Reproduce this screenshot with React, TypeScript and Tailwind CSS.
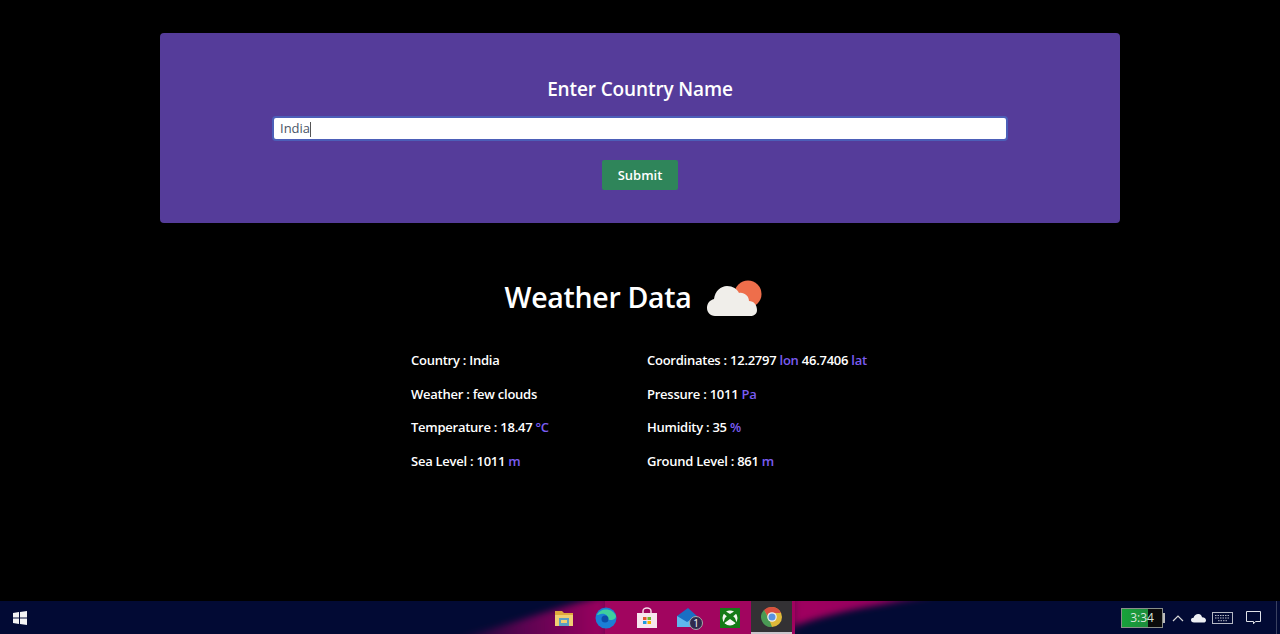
import React from 'react';

const font = { fontFamily: '"Open Sans", "Noto Sans", sans-serif' };

function Unit({ children }: { children: React.ReactNode }) {
  return <span className="text-[#7a5cf0]">{children}</span>;
}

function CloudSun() {
  return (
    <svg width="56" height="40" viewBox="0 0 56 40" className="block">
      <circle cx="41" cy="16" r="13.500" fill="#ee6e4b" />
      <path
        d="M8 38 C3 38 0 34 0 30 C0 25 3 22 7 21 C8 13 14 8 20 8 C26 8 30 11 32 15 C37 14 42 18 42 23 C47 23 50 27 50 32 C50 36 47 38 43 38 Z"
        fill="#f0eeea"
      />
    </svg>
  );
}

function Folder() {
  return (
    <svg width="20" height="18" viewBox="0 0 20 18">
      <path d="M1 2h7l2 2h9v13H1z" fill="#e0a93c" />
      <rect x="1" y="6" width="18" height="11" fill="#f0cf72" />
      <rect x="5" y="9" width="10" height="8" fill="#5b9fc4" />
      <rect x="7" y="11" width="6" height="3" fill="#f0cf72" />
    </svg>
  );
}

function Edge() {
  return (
    <svg width="22" height="22" viewBox="0 0 22 22">
      <circle cx="11" cy="11" r="10.5" fill="#1b7fd6" />
      <path d="M2 8 C5 1 17 0 21 9 C21 13 15 14 12 12 C14 9 10 6 6 7 C4 7.500 3 8 2 8Z" fill="#3fcf9e" />
      <circle cx="10" cy="12" r="3.500" fill="#0c4fa8" />
    </svg>
  );
}

function Store() {
  return (
    <svg width="20" height="22" viewBox="0 0 20 22">
      <path d="M6 6V4a4 3 0 0 1 8 0v2" fill="none" stroke="#f5d9e8" strokeWidth="1.500" />
      <rect x="0" y="6" width="20" height="15" fill="#f7e6ef" />
      <rect x="6" y="10" width="3.500" height="3" fill="#e2562d" />
      <rect x="10.500" y="10" width="3.500" height="3" fill="#6fb52c" />
      <rect x="6" y="14" width="3.500" height="3" fill="#1f9be0" />
      <rect x="10.500" y="14" width="3.500" height="3" fill="#f4b400" />
    </svg>
  );
}

function Mail() {
  return (
    <div className="relative w-[22px] h-[22px]">
      <svg width="22" height="20" viewBox="0 0 22 20" className="mt-[1px]">
        <path d="M0 8 L11 0 L20 8 V19 H0Z" fill="#1a6fc4" />
        <path d="M0 8 L10 14 L20 8 V19 H0Z" fill="#5fb7ee" />
      </svg>
      <div className="absolute left-[12px] top-[9px] w-[14px] h-[14px] rounded-full bg-[#2f2a4d] border border-[#aaa] flex items-center justify-center text-[10px] leading-none text-white">
        1
      </div>
    </div>
  );
}

function Xbox() {
  return (
    <div className="w-[20px] h-[20px] bg-[#157a17] flex items-center justify-center">
      <svg width="16" height="16" viewBox="0 0 16 16">
        <circle cx="8" cy="8" r="7.500" fill="#f4f7f2" />
        <path d="M1 3 L8 9 L15 3 L15 0 L1 0Z" fill="#157a17" />
        <path d="M8 3 L3 8 L1 14 L8 9 L15 14 L13 8Z" fill="#157a17" />
        <path d="M4 1.500 Q8 -0.500 12 1.500 L8 4Z" fill="#f4f7f2" />
      </svg>
    </div>
  );
}

function Chrome() {
  return (
    <svg width="22" height="22" viewBox="0 0 22 22">
      <circle cx="11" cy="11" r="10" fill="#e0b93a" />
      <path d="M11 1 A10 10 0 0 1 20 7 H11 A4 4 0 0 0 7 11 L3 4 A10 10 0 0 1 11 1Z" fill="#d9503f" />
      <path d="M3 4 L8 13 L11 21 A10 10 0 0 1 3 4Z" fill="#4a9a54" />
      <circle cx="11" cy="11" r="4.800" fill="#f1f1f1" />
      <circle cx="11" cy="11" r="3.500" fill="#5a92e0" />
    </svg>
  );
}

// magenta streak of the wallpaper showing through the taskbar
function Wallpaper() {
  return (
    <svg width="1280" height="33" viewBox="0 0 1280 33" className="absolute inset-0">
      <defs>
        <linearGradient id="fade" x1="450" x2="610" y1="0" y2="0" gradientUnits="userSpaceOnUse">
          <stop offset="0" stopColor="#a1055f" stopOpacity="0" />
          <stop offset="0.5" stopColor="#8a0860" stopOpacity="0.7" />
          <stop offset="1" stopColor="#a1055f" />
        </linearGradient>
        <linearGradient id="fadeRight" x1="790" x2="945" y1="0" y2="0" gradientUnits="userSpaceOnUse">
          <stop offset="0" stopColor="#a1055f" />
          <stop offset="0.6" stopColor="#95065f" />
          <stop offset="1" stopColor="#a1055f" stopOpacity="0" />
        </linearGradient>
        <filter id="soft" x="-10%" y="-100%" width="120%" height="300%">
          <feGaussianBlur stdDeviation="6 3" />
        </filter>
      </defs>
      <path d="M440 40 C500 30 550 6 610 -6 L610 40 Z" fill="url(#fade)" filter="url(#soft)" />
      <rect x="605" y="-4" width="190" height="44" fill="#a1055f" />
      <path d="M790 -6 L945 -6 C890 2 840 8 792 26 L790 40 Z" fill="url(#fadeRight)" filter="url(#soft)" />
    </svg>
  );
}

function Taskbar() {
  return (
    <div className="relative h-[33px] flex items-center bg-[#020a34] overflow-hidden">
      <Wallpaper />
      <div className="relative ml-[13px] w-[14px]">
        <svg width="14" height="14" viewBox="0 0 14 14">
          <path d="M0 2 L6 1 V6.500 H0Z M7 1 L14 0 V6.500 H7Z M0 7.500 H6 V13 L0 12Z M7 7.500 H14 V14 L7 13Z" fill="#f4f4f4" />
        </svg>
      </div>
      <div className="relative ml-[516px] h-full flex items-center">
        <div className="w-[42px] flex justify-center"><Folder /></div>
        <div className="w-[41px] flex justify-center"><Edge /></div>
        <div className="w-[41px] flex justify-center"><Store /></div>
        <div className="w-[42px] flex justify-center"><Mail /></div>
        <div className="w-[42px] flex justify-center"><Xbox /></div>
        <div className="w-[41px] h-full flex items-center justify-center bg-[#333134] border-b-2 border-[#c9c6cc]"><Chrome /></div>
      </div>
      <div className="relative ml-auto h-full flex items-center">
        <div className="w-[42px] h-[20px] flex items-center justify-center text-[12px] text-[#d9e6dc] border border-[#8a8f8a] bg-[linear-gradient(90deg,#17a33a_0%,#1d8c3c_65%,#0b0b0b_65%,#0b0b0b_100%)]">
          3:34
        </div>
        <div className="w-[2px] h-[10px] bg-[#bbb] mr-[6px]" />
        <svg width="12" height="8" viewBox="0 0 12 8" className="ml-[1px]">
          <path d="M1 7 L6 2 L11 7" fill="none" stroke="#d8d8d8" strokeWidth="1.200" />
        </svg>
        <svg width="15" height="10" viewBox="0 0 15 10" className="ml-[7px]">
          <path d="M3 9.500 C1 9.500 0 8.300 0 7 C0 5.500 1.300 4.600 2.600 4.700 C3.300 2 5.500 0.800 7.500 1 C9.500 1.200 10.800 2.500 11 4.300 C13 4.200 15 5.500 15 7.200 C15 8.600 14 9.500 12.500 9.500Z" fill="#eef0f4" />
        </svg>
        <svg width="21" height="12" viewBox="0 0 21 12" className="ml-[6px]">
          <rect x="0.500" y="0.500" width="20" height="11" fill="none" stroke="#b5b8c4" />
          <path d="M3 3.500h15M3 6h15M6 8.700h9" stroke="#b5b8c4" strokeDasharray="1.500 1" />
        </svg>
        <svg width="15" height="15" viewBox="0 0 15 15" className="ml-[13px]">
          <path d="M0.500 1.500 H14.500 V11.500 H9.500 L7.500 13.800 V11.500 H0.500Z" fill="none" stroke="#dfe1e8" />
        </svg>
        <div className="ml-[15px] mr-[3px] w-[1px] h-full bg-[#3a4160]" />
      </div>
    </div>
  );
}

const leftRows = [
  <>Country : India</>,
  <>Weather : few clouds</>,
  <>Temperature : 18.47 <Unit>°C</Unit></>,
  <>Sea Level : 1011 <Unit>m</Unit></>,
];

const rightRows = [
  <>Coordinates : 12.2797 <Unit>lon</Unit> 46.7406 <Unit>lat</Unit></>,
  <>Pressure : 1011 <Unit>Pa</Unit></>,
  <>Humidity : 35 <Unit>%</Unit></>,
  <>Ground Level : 861 <Unit>m</Unit></>,
];

export default function App() {
  return (
    <div className="w-[1280px] h-[634px] bg-black flex flex-col overflow-hidden text-white" style={font}>
      <div className="flex-1 pt-[33px]">
        <div className="w-[960px] h-[190px] mx-auto rounded-[4px] bg-[#553c9a] flex flex-col items-center pt-[43px]">
          <h2 className="text-[19px] leading-[26px] font-semibold tracking-[-0.12px]">Enter Country Name</h2>
          <div className="mt-[14px] w-[736px] h-[25px] rounded-[4px] bg-white border-2 border-[#4c5fb8] flex items-center pl-[6px] pt-[1px] text-[13px] text-[#4a5568]">
            India<span className="w-[1px] h-[15px] bg-[#555]" />
          </div>
          <button className="mt-[19px] w-[76px] h-[30px] rounded-[2px] bg-[#2f855a] text-[13px] font-semibold pt-[2px]">Submit</button>
        </div>

        <div className="mt-[49px] flex justify-center items-center h-[50px] pr-[13px]">
          <h1 className="text-[28.500px] leading-[40px] font-semibold tracking-[-0.3px]">Weather Data</h1>
          <div className="ml-[15px] mt-[2px]"><CloudSun /></div>
        </div>

        <div className="mt-[28px] ml-[411px] flex text-[13px] font-semibold tracking-[-0.25px]">
          <div className="w-[236px] flex flex-col gap-[13.500px]">
            {leftRows.map((row, i) => <div key={i} className="h-[20px] leading-[20px]">{row}</div>)}
          </div>
          <div className="flex flex-col gap-[13.500px]">
            {rightRows.map((row, i) => <div key={i} className="h-[20px] leading-[20px]">{row}</div>)}
          </div>
        </div>
      </div>
      <Taskbar />
    </div>
  );
}
